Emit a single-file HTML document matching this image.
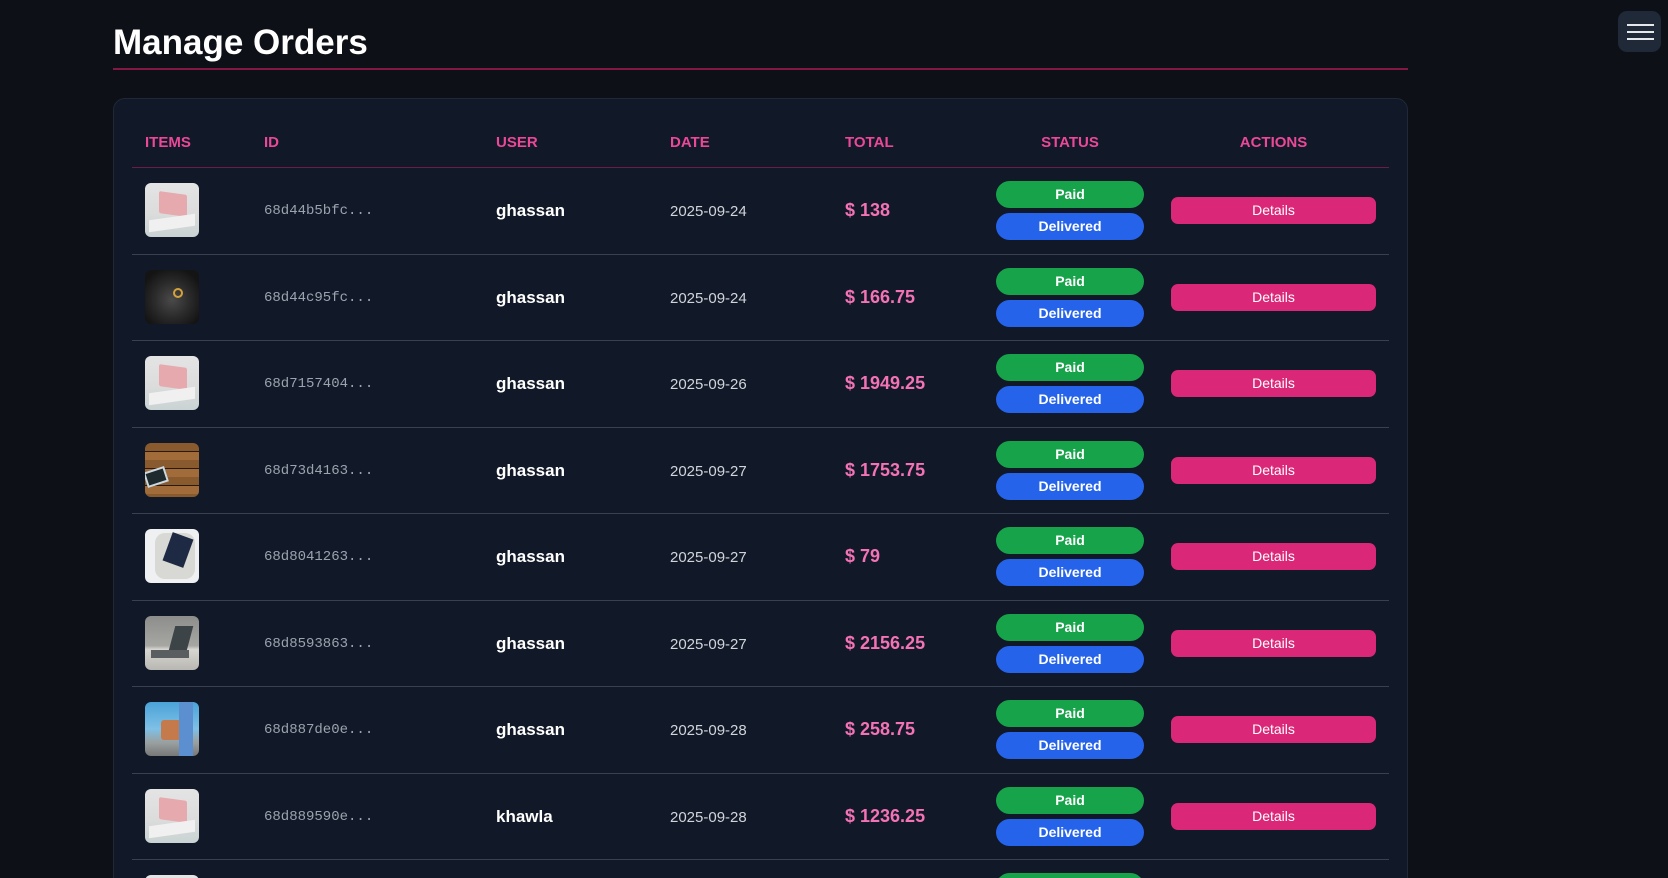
<!DOCTYPE html>
<html><head><meta charset="utf-8"><style>
*{margin:0;padding:0;box-sizing:border-box}
html,body{width:1668px;height:878px;overflow:hidden;background:#0d1017;font-family:"Liberation Sans",sans-serif}
#wrap{position:relative;width:1668px;height:878px;overflow:hidden}
h1{position:absolute;left:113px;top:25px;font-size:35px;line-height:1;font-weight:900;color:#fff}
.uline{position:absolute;left:113px;top:68px;width:1295px;height:2px;background:#831843}
.card{position:absolute;left:113px;top:98px;width:1295px;height:800px;background:#111827;border:1px solid #1f2937;border-radius:12px}
.th{position:absolute;top:134px;color:#ec4899;font-weight:bold;font-size:15px}
.hdiv{position:absolute;left:132px;top:167px;width:1257px;height:1px;background:#6b1d45}
.rdiv{position:absolute;left:132px;width:1257px;height:1px;background:#374151}
.img{position:absolute;left:145px;width:54px;height:54px;border-radius:6px;overflow:hidden}
.id{position:absolute;left:264px;font-family:"Liberation Mono",monospace;font-size:14px;color:#9ca3af}
.user{position:absolute;left:496px;font-size:17px;font-weight:bold;color:#fff}
.date{position:absolute;left:670px;font-size:15px;color:#d1d5db}
.tot{position:absolute;left:845px;font-size:18px;font-weight:bold;color:#f472b6}
.pill{position:absolute;left:996px;width:148px;height:27px;border-radius:14px;color:#fff;font-size:14px;font-weight:bold;text-align:center;line-height:27px}
.paid{background:#16a34a}.del{background:#2563eb}
.det{position:absolute;left:1171px;width:205px;height:27px;border-radius:7px;background:#db2777;color:#fff;font-size:14px;text-align:center;line-height:27px}
.ham{position:absolute;left:1618px;top:11px;width:43px;height:41px;background:#1f2937;border-radius:9px}
.ham i{position:absolute;left:9px;width:27px;height:2px;background:#e5e7eb}
</style></head><body><div id="wrap">
<h1>Manage Orders</h1>
<div class="uline"></div>
<div class="ham"><i style="top:13px"></i><i style="top:20px"></i><i style="top:27px"></i></div>
<div class="card"></div>
<div class="th" style="left:145px">ITEMS</div>
<div class="th" style="left:264px">ID</div>
<div class="th" style="left:496px">USER</div>
<div class="th" style="left:670px">DATE</div>
<div class="th" style="left:845px">TOTAL</div>
<div class="th" style="left:996px;width:148px;text-align:center">STATUS</div>
<div class="th" style="left:1171px;width:205px;text-align:center">ACTIONS</div>
<div class="hdiv"></div>
<div id="rows"></div>
</div>
<script>
var data=[
["68d44b5bfc...","ghassan","2025-09-24","$ 138","pink"],
["68d44c95fc...","ghassan","2025-09-24","$ 166.75","black"],
["68d7157404...","ghassan","2025-09-26","$ 1949.25","pink"],
["68d73d4163...","ghassan","2025-09-27","$ 1753.75","wood"],
["68d8041263...","ghassan","2025-09-27","$ 79","cloth"],
["68d8593863...","ghassan","2025-09-27","$ 2156.25","desk"],
["68d887de0e...","ghassan","2025-09-28","$ 258.75","beach"],
["68d889590e...","khawla","2025-09-28","$ 1236.25","pink"],
["","","","","pink"]];
var thumbs={
pink:'background:linear-gradient(180deg,#e4e4e4 0%,#dcdcdc 55%,#c9d3d3 100%)"><div style="position:absolute;left:14px;top:10px;width:28px;height:22px;background:#e6a9ae;transform:skewY(8deg);border-radius:2px"></div><div style="position:absolute;left:4px;top:34px;width:46px;height:12px;background:#f0f0f0;transform:skewY(-8deg)"></div><div style="',
black:'background:radial-gradient(circle at 50% 55%,#4a4a4a 0%,#2a2a2a 45%,#141414 80%)"><div style="position:absolute;left:28px;top:18px;width:10px;height:10px;border:2px solid #d4a43a;border-radius:50%"></div><div style="',
wood:'background:repeating-linear-gradient(180deg,#8a5a2f 0 8px,#2a1a0e 8px 9px,#a26c3a 9px 17px)"><div style="position:absolute;left:0;top:26px;width:22px;height:16px;background:#1f2a2e;border:2px solid #cfd8dc;transform:rotate(-18deg)"></div><div style="',
cloth:'background:#eef0f2"><div style="position:absolute;left:10px;top:4px;width:40px;height:46px;background:#d8d8d4;border-radius:10px"></div><div style="position:absolute;left:22px;top:6px;width:22px;height:30px;background:#1e2a44;transform:rotate(20deg)"></div><div style="',
desk:'background:linear-gradient(180deg,#8d8d8b 0%,#a6a6a3 55%,#d8d6d0 62%,#b9b7b1 100%)"><div style="position:absolute;left:26px;top:10px;width:18px;height:32px;background:#3c4448;transform:skewX(-15deg)"></div><div style="position:absolute;left:6px;top:34px;width:38px;height:8px;background:#5a5e60"></div><div style="',
beach:'background:linear-gradient(180deg,#4aa3d8 0%,#7fc0e6 50%,#9aa0a0 75%,#777 100%)"><div style="position:absolute;left:16px;top:18px;width:24px;height:20px;background:#c57a4c;border-radius:3px"></div><div style="position:absolute;left:34px;top:0;width:14px;height:54px;background:#5b8fcf"></div><div style="'
};
var h='';
for(var i=0;i<data.length;i++){
 var d=167+86.5*i, r=data[i];
 if(i>0) h+='<div class="rdiv" style="top:'+d+'px"></div>';
 h+='<div class="img" style="top:'+(d+16)+'px;'+thumbs[r[4]]+'"></div></div>';
 var c=d+45;
 h+='<div class="id" style="top:'+(c-9)+'px">'+r[0]+'</div>';
 h+='<div class="user" style="top:'+(c-11)+'px">'+r[1]+'</div>';
 h+='<div class="date" style="top:'+(c-9)+'px">'+r[2]+'</div>';
 h+='<div class="tot" style="top:'+(c-12)+'px">'+r[3]+'</div>';
 h+='<div class="pill paid" style="top:'+(d+14)+'px">Paid</div>';
 h+='<div class="pill del" style="top:'+(d+46)+'px">Delivered</div>';
 h+='<div class="det" style="top:'+(d+30)+'px">Details</div>';
}
document.getElementById('rows').innerHTML=h;
</script>
</body></html>
